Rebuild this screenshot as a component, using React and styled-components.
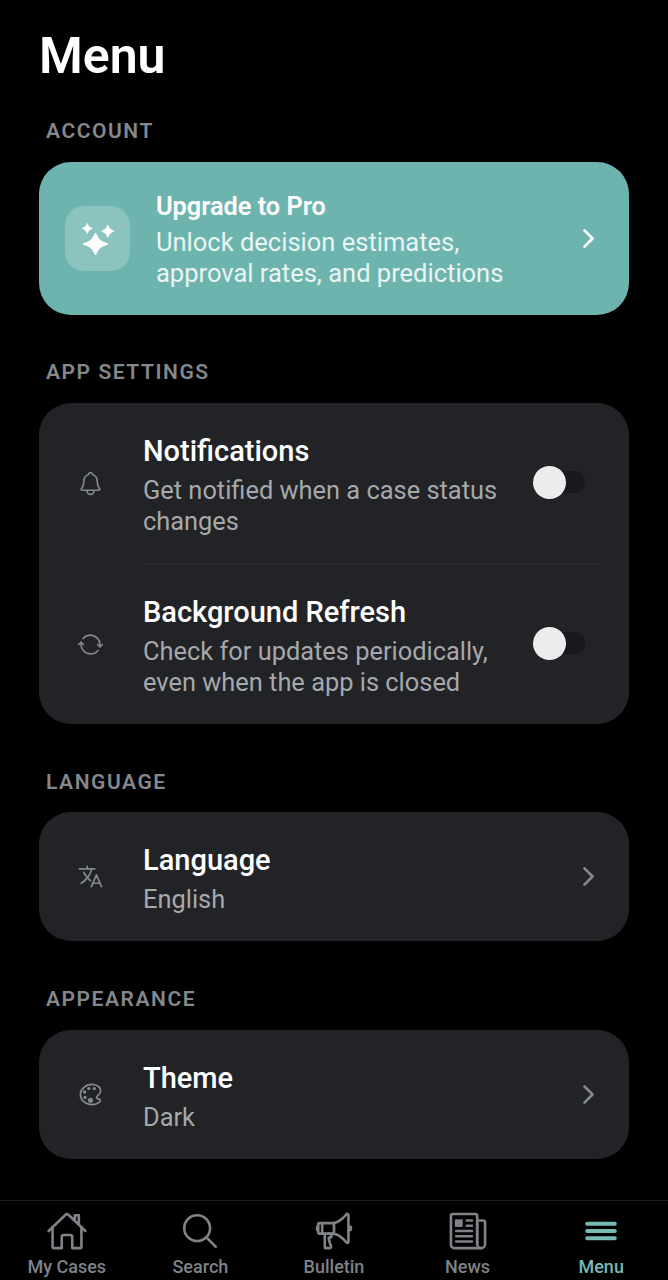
import React from "react";
import styled, { createGlobalStyle } from "styled-components";
import {
  IoChevronForward,
  IoColorPaletteOutline,
  IoHomeOutline,
  IoLanguageOutline,
  IoMegaphoneOutline,
  IoNewspaperOutline,
  IoNotificationsOutline,
  IoReorderThree,
  IoSearchOutline,
  IoSyncOutline,
} from "react-icons/io5";

const GlobalStyle = createGlobalStyle`
  html, body {
    margin: 0;
    padding: 0;
    background: #000;
  }
  * {
    box-sizing: border-box;
  }
`;

const Screen = styled.div`
  width: 668px;
  height: 1280px;
  display: flex;
  flex-direction: column;
  background: #000;
  color: #fff;
  font-family: Roboto, "Liberation Sans", sans-serif;
  overflow: hidden;
`;

const Content = styled.main`
  flex: 1;
  padding: 26px 39px 0;
`;

const Title = styled.h1`
  margin: 0;
  font-size: 50px;
  line-height: 60px;
  font-weight: 600;
`;

const SectionLabel = styled.h2`
  margin: ${(p) => p.$top}px 0 ${(p) => p.$bottom}px 7px;
  font-size: 21px;
  line-height: 28px;
  font-weight: 600;
  letter-spacing: 1.55px;
  color: #84878c;
`;

const Card = styled.section`
  background: #212327;
  border-radius: 32px;
`;

const UpgradeCard = styled.section`
  height: 153px;
  display: flex;
  align-items: center;
  padding: 0 26px;
  background: #6eb4ae;
  border-radius: 32px;
`;

const UpgradeBadge = styled.div`
  width: 65px;
  height: 65px;
  margin-right: 26px;
  display: flex;
  align-items: center;
  justify-content: center;
  background: rgba(255, 255, 255, 0.2);
  border-radius: 19px;
`;

const UpgradeText = styled.div`
  flex: 1;
  padding-top: 3px;
`;

const UpgradeTitle = styled.div`
  margin-bottom: 5px;
  font-size: 25.3px;
  line-height: 31px;
  font-weight: 600;
  color: #fff;
`;

const UpgradeSub = styled.div`
  font-size: 25.5px;
  line-height: 31px;
  color: #e8f5f3;
`;

const Row = styled.div`
  display: flex;
  align-items: center;
  height: ${(p) => p.$height}px;
  padding-left: 26px;
  padding-right: 26px;
`;

const RowIcon = styled.div`
  width: 50px;
  margin-right: 28px;
  display: flex;
  justify-content: center;
  font-size: 27px;
  color: #85888c;
`;

const RowText = styled.div`
  flex: 1;
  padding-top: 3px;
`;

const RowTitle = styled.div`
  margin-bottom: 5px;
  font-size: 29px;
  line-height: 38px;
  font-weight: 500;
  color: #fff;
`;

const RowSub = styled.div`
  font-size: 25.4px;
  line-height: 31px;
  color: #a6a8ab;
`;

const Divider = styled.div`
  height: 1px;
  margin-left: 104px;
  margin-right: 26px;
  background: #2b2d32;
`;

const Switch = styled.div`
  position: relative;
  width: 52px;
  height: 22px;
  margin-right: 18px;
  margin-bottom: 2px;
  background: #18191c;
  border-radius: 11px;
`;

const Knob = styled.div`
  position: absolute;
  left: 0;
  top: -5px;
  width: 33px;
  height: 33px;
  background: #ececec;
  border-radius: 50%;
`;

const Chevron = styled.div`
  display: flex;
  font-size: 29px;
  color: ${(p) => p.$color};
`;

const TabBar = styled.nav`
  height: 80px;
  display: grid;
  grid-template-columns: repeat(5, 1fr);
  border-top: 1px solid #1d1e21;
  background: #000;
`;

const Tab = styled.div`
  display: flex;
  flex-direction: column;
  align-items: center;
  padding-top: 9px;
  color: ${(p) => (p.$active ? "#76bab3" : "#7f8287")};
`;

const TabIcon = styled.div`
  height: 42px;
  margin-bottom: 4px;
  display: flex;
  align-items: center;
  font-size: ${(p) => p.$size || 42}px;
`;

const TabLabel = styled.div`
  font-size: 18px;
  line-height: 22px;
  font-weight: 500;
`;

const star = (cx, cy, rx, ry) =>
  `M${cx} ${cy - ry}C${cx + rx * 0.22} ${cy - ry * 0.42} ${cx + rx * 0.42} ${cy - ry * 0.22} ${cx + rx} ${cy}` +
  `C${cx + rx * 0.42} ${cy + ry * 0.22} ${cx + rx * 0.22} ${cy + ry * 0.42} ${cx} ${cy + ry}` +
  `C${cx - rx * 0.22} ${cy + ry * 0.42} ${cx - rx * 0.42} ${cy + ry * 0.22} ${cx - rx} ${cy}` +
  `C${cx - rx * 0.42} ${cy - ry * 0.22} ${cx - rx * 0.22} ${cy - ry * 0.42} ${cx} ${cy - ry}Z`;

const Sparkle = () => (
  <svg width="34" height="34" viewBox="0 0 34 34" fill="#fff" stroke="#fff" strokeLinejoin="round">
    <path d={star(14.5, 22, 12.5, 11)} strokeWidth="1" />
    <path d={star(6.2, 6.5, 5.2, 5.2)} strokeWidth="0.6" />
    <path d={star(26.8, 9.2, 6.4, 6.4)} strokeWidth="0.6" />
  </svg>
);

const tabs = [
  { label: "My Cases", Icon: IoHomeOutline },
  { label: "Search", Icon: IoSearchOutline },
  { label: "Bulletin", Icon: IoMegaphoneOutline },
  { label: "News", Icon: IoNewspaperOutline },
  { label: "Menu", Icon: IoReorderThree, active: true, size: 46 },
];

export default function App() {
  return (
    <Screen>
      <GlobalStyle />
      <Content>
        <Title>Menu</Title>

        <SectionLabel $top={31} $bottom={17}>ACCOUNT</SectionLabel>
        <UpgradeCard>
          <UpgradeBadge>
            <Sparkle />
          </UpgradeBadge>
          <UpgradeText>
            <UpgradeTitle>Upgrade to Pro</UpgradeTitle>
            <UpgradeSub>
              Unlock decision estimates,
              <br />
              approval rates, and predictions
            </UpgradeSub>
          </UpgradeText>
          <Chevron $color="#fff">
            <IoChevronForward />
          </Chevron>
        </UpgradeCard>

        <SectionLabel $top={43} $bottom={17}>APP SETTINGS</SectionLabel>
        <Card>
          <Row $height={160}>
            <RowIcon>
              <IoNotificationsOutline />
            </RowIcon>
            <RowText>
              <RowTitle>Notifications</RowTitle>
              <RowSub>
                Get notified when a case status
                <br />
                changes
              </RowSub>
            </RowText>
            <Switch>
              <Knob />
            </Switch>
          </Row>
          <Divider />
          <Row $height={160}>
            <RowIcon>
              <IoSyncOutline />
            </RowIcon>
            <RowText>
              <RowTitle>Background Refresh</RowTitle>
              <RowSub>
                Check for updates periodically,
                <br />
                even when the app is closed
              </RowSub>
            </RowText>
            <Switch>
              <Knob />
            </Switch>
          </Row>
        </Card>

        <SectionLabel $top={44} $bottom={16}>LANGUAGE</SectionLabel>
        <Card>
          <Row $height={129}>
            <RowIcon>
              <IoLanguageOutline />
            </RowIcon>
            <RowText>
              <RowTitle>Language</RowTitle>
              <RowSub>English</RowSub>
            </RowText>
            <Chevron $color="#85888c">
              <IoChevronForward />
            </Chevron>
          </Row>
        </Card>

        <SectionLabel $top={44} $bottom={17}>APPEARANCE</SectionLabel>
        <Card>
          <Row $height={129}>
            <RowIcon>
              <IoColorPaletteOutline />
            </RowIcon>
            <RowText>
              <RowTitle>Theme</RowTitle>
              <RowSub>Dark</RowSub>
            </RowText>
            <Chevron $color="#85888c">
              <IoChevronForward />
            </Chevron>
          </Row>
        </Card>
      </Content>

      <TabBar>
        {tabs.map(({ label, Icon, active, size }) => (
          <Tab key={label} $active={active}>
            <TabIcon $size={size}>
              <Icon />
            </TabIcon>
            <TabLabel>{label}</TabLabel>
          </Tab>
        ))}
      </TabBar>
    </Screen>
  );
}
